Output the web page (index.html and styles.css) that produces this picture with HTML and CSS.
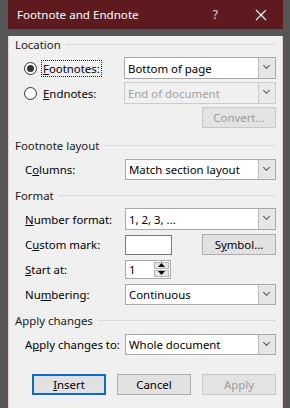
FILE: index.html
```html
<!DOCTYPE html>
<html lang="en">
<head>
    <meta charset="UTF-8">
    <title>Footnote and Endnote</title>
    <link rel="stylesheet" href="styles.css">
</head>
<body>
    <div class="window">
        <div class="titlebar">
            <span class="title">Footnote and Endnote</span>
            <span class="help">?</span>
            <svg class="close" width="12" height="12" viewBox="0 0 12 12">
                <path d="M1 1 L11 11 M11 1 L1 11" stroke="#fff" stroke-width="1.2" fill="none"/>
            </svg>
        </div>

        <div class="dialog">
            <div class="group-title g-location">Location</div>

            <div class="row r-first">
                <label class="label radio-label">
                    <span class="radio checked"></span>
                    <span class="focus"><u>F</u>ootnotes:</span>
                </label>
                <div class="select">
                    <span class="value">Bottom of page</span>
                    <span class="arrow"></span>
                </div>
            </div>

            <div class="row r-tight">
                <label class="label radio-label">
                    <span class="radio"></span>
                    <span class="focus plain"><u>E</u>ndnotes:</span>
                </label>
                <div class="select disabled">
                    <span class="value">End of document</span>
                    <span class="arrow"></span>
                </div>
            </div>

            <div class="row r-tight right">
                <button class="btn disabled">Convert...</button>
            </div>

            <div class="group-title g-layout">Footnote layout</div>

            <div class="row r-after-title">
                <label class="label">C<u>o</u>lumns:</label>
                <div class="select">
                    <span class="value">Match section layout</span>
                    <span class="arrow"></span>
                </div>
            </div>

            <div class="group-title g-format">Format</div>

            <div class="row r-first">
                <label class="label"><u>N</u>umber format:</label>
                <div class="select">
                    <span class="value">1, 2, 3, ...</span>
                    <span class="arrow"></span>
                </div>
            </div>

            <div class="row r-mark">
                <label class="label">C<u>u</u>stom mark:</label>
                <div class="mark-box"></div>
                <button class="btn symbol">S<u>y</u>mbol...</button>
            </div>

            <div class="row r-start">
                <label class="label"><u>S</u>tart at:</label>
                <div class="spinner">
                    <span class="value">1</span>
                    <span class="spin">
                        <span class="spin-btn"><svg width="7" height="4" viewBox="0 0 7 4"><path d="M0 4 L3.5 0 L7 4 Z" fill="#000"/></svg></span>
                        <span class="spin-btn"><svg width="7" height="4" viewBox="0 0 7 4"><path d="M0 0 L3.5 4 L7 0 Z" fill="#000"/></svg></span>
                    </span>
                </div>
            </div>

            <div class="row r-numbering">
                <label class="label">Nu<u>m</u>bering:</label>
                <div class="select">
                    <span class="value">Continuous</span>
                    <span class="arrow"></span>
                </div>
            </div>

            <div class="group-title g-apply">Apply changes</div>

            <div class="row r-after-title">
                <label class="label">A<u>p</u>ply changes to:</label>
                <div class="select">
                    <span class="value">Whole document</span>
                    <span class="arrow"></span>
                </div>
            </div>

            <div class="buttons">
                <button class="btn default"><u>I</u>nsert</button>
                <button class="btn">Cancel</button>
                <button class="btn disabled">Apply</button>
            </div>
        </div>
    </div>
</body>
</html>
```

FILE: styles.css
```css
* {
    margin: 0;
    padding: 0;
    box-sizing: border-box;
    font-family: 'Noto Sans', 'Open Sans', sans-serif;
}

body {
    background-color: #565656;
    width: 290px;
    height: 408px;
    overflow: hidden;
}

.window {
    margin-left: 8px;
    width: 275px;
}

.titlebar {
    height: 29px;
    background-color: #5e1a1f;
    color: #fff;
    display: flex;
    align-items: center;
    padding-left: 9px;
    padding-right: 16px;
}

.title {
    font-size: 11.6px;
    flex: 1;
}

.help {
    font-size: 12px;
    margin-right: 37px;
    color: #e8dada;
}

.close {
    display: block;
}

.dialog {
    background-color: #f0f0f0;
    border: 1px solid #e6cfcf;
    border-top: none;
    padding: 0 6px 8px 6px;
    height: 373px;
    font-size: 11.4px;
    color: #000;
}

.group-title {
    height: 16px;
    display: flex;
    align-items: center;
    color: #1a1a1a;
}

.group-title::after {
    content: "";
    flex: 1;
    border-top: 1px solid #dcdcdc;
    margin-left: 5px;
    margin-top: 1px;
}

.g-location { margin-top: 7px; }
.g-layout { margin-top: 9px; }
.g-format { margin-top: 7px; }
.g-apply { margin-top: 7px; }

.row {
    display: flex;
    align-items: center;
    height: 22px;
    padding-left: 10px;
}

.r-first { margin-top: 5px; }
.r-tight { margin-top: 3px; }
.r-after-title { margin-top: 6px; height: 21px; }
.r-mark { margin-top: 4px; height: 21px; }
.r-start { margin-top: 4px; height: 20px; }
.r-numbering { margin-top: 5px; height: 21px; }

.row.right {
    justify-content: flex-end;
    height: 21px;
}

.label {
    width: 100px;
    flex-shrink: 0;
    display: flex;
    align-items: center;
    white-space: nowrap;
}

.radio-label {
    margin-left: -1px;
}

.radio {
    width: 13px;
    height: 13px;
    border: 1px solid #333;
    border-radius: 50%;
    background-color: #fff;
    margin-right: 4px;
    position: relative;
}

.radio.checked::after {
    content: "";
    position: absolute;
    left: 2px;
    top: 2px;
    width: 7px;
    height: 7px;
    border-radius: 50%;
    background-color: #333;
}

.focus {
    border: 1px dotted #222;
    padding: 0 1px;
    line-height: 15px;
}

.focus.plain {
    border-color: transparent;
}

.select {
    flex: 1;
    height: 100%;
    display: flex;
    background-color: #fff;
    border: 1px solid #a9a9a9;
}

.select .value {
    flex: 1;
    padding-left: 3px;
    display: flex;
    align-items: center;
}

.select .arrow {
    width: 17px;
    background-color: #e6e6e6;
    border-left: 1px solid #b9b9b9;
    position: relative;
}

.select .arrow::after {
    content: "";
    position: absolute;
    left: 5px;
    top: 5px;
    width: 4px;
    height: 4px;
    border-right: 1px solid #555;
    border-bottom: 1px solid #555;
    transform: rotate(45deg);
}

.select.disabled {
    background-color: #f0f0f0;
    border-color: #cccccc;
    color: #a0a0a0;
}

.select.disabled .arrow {
    background-color: #e9e9e9;
    border-left-color: #c9c9c9;
}

.btn {
    width: 74px;
    height: 21px;
    font-size: 11.4px;
    background-color: #e1e1e1;
    border: 1px solid #adadad;
    color: #000;
}

.btn.disabled {
    background-color: #e3e3e3;
    border-color: #c8c8c8;
    color: #9c9c9c;
}

.btn.default {
    border: 2px solid #0a6fc2;
}

.mark-box {
    width: 47px;
    height: 20px;
    background-color: #fff;
    border: 1px solid #7a7a7a;
    margin-top: 1px;
}

.btn.symbol {
    margin-left: auto;
}

.spinner {
    width: 46px;
    height: 19px;
    background-color: #fff;
    border: 1px solid #a9a9a9;
    display: flex;
}

.spinner .value {
    flex: 1;
    padding-left: 3px;
    display: flex;
    align-items: center;
}

.spin {
    width: 16px;
    display: flex;
    flex-direction: column;
    padding: 1px 1px 1px 0;
    gap: 1px;
}

.spin-btn {
    flex: 1;
    background-color: #e6e6e6;
    border: 1px solid #b5b5b5;
    display: flex;
    align-items: center;
    justify-content: center;
}

.spin-btn svg {
    display: block;
}

.buttons {
    display: flex;
    justify-content: flex-end;
    gap: 11px;
    margin-top: 19px;
    padding-left: 19px;
}

.buttons .btn {
    flex: 0 0 74px;
}
```
